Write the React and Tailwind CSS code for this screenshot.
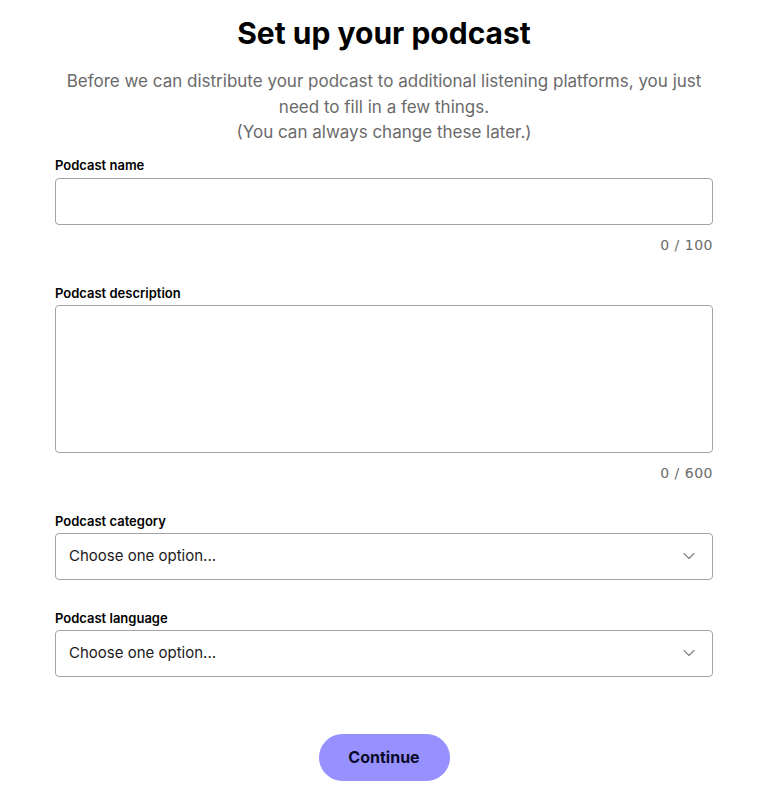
import { ChevronDown } from 'lucide-react'

const font = { fontFamily: 'Inter, "Noto Sans", sans-serif' }

function Counter({ text }) {
    return (
        <p className="mt-[12px] text-right text-[14px] leading-[16px] text-[#6b6b6b] font-['DejaVu_Sans',sans-serif] tracking-[0.5px]">
            {text}
        </p>
    )
}

function SelectBox({ label }) {
    return (
        <div>
            <label className="block text-[13px] font-semibold leading-[16px] text-black">{label}</label>
            <div className="mt-[4px] flex h-[47px] items-center justify-between rounded-[4px] border border-[#a3a3a3] px-[13px]">
                <span className="text-[15px] text-[#1a1a1a]">Choose one option...</span>
                <ChevronDown className="h-5 w-5 text-[#8a8a8a]" strokeWidth={1.5} />
            </div>
        </div>
    )
}

export default function App() {
    return (
        <div className="min-h-screen bg-white" style={font}>
            <div className="mx-auto w-[658px] pt-[14px]">
                <h1 className="text-center text-[30px] font-bold leading-[38px] tracking-[0px] text-black">
                    Set up your podcast
                </h1>
                <p className="mt-[17px] text-center text-[17px] leading-[25.5px] text-[#6a6a6a]">
                    Before we can distribute your podcast to additional listening platforms, you just need to fill in a few things.
                    <br />
                    (You can always change these later.)
                </p>

                <div className="mt-[11px]">
                    <label className="block text-[13px] font-semibold leading-[16px] text-black">Podcast name</label>
                    <div className="mt-[5px] h-[47px] rounded-[4px] border border-[#a3a3a3]" />
                    <Counter text="0 / 100" />
                </div>

                <div className="mt-[32px]">
                    <label className="block text-[13px] font-semibold leading-[16px] text-black">Podcast description</label>
                    <div className="mt-[4px] h-[148px] rounded-[4px] border border-[#a3a3a3]" />
                    <Counter text="0 / 600" />
                </div>

                <div className="mt-[32px] flex flex-col gap-[30px]">
                    <SelectBox label="Podcast category" />
                    <SelectBox label="Podcast language" />
                </div>

                <div className="mt-[57px] flex justify-center">
                    <button className="h-[47px] w-[131px] rounded-full bg-[#9691ff] text-[16px] font-bold text-[#0b0b2a]">
                        Continue
                    </button>
                </div>
            </div>
        </div>
    )
}
